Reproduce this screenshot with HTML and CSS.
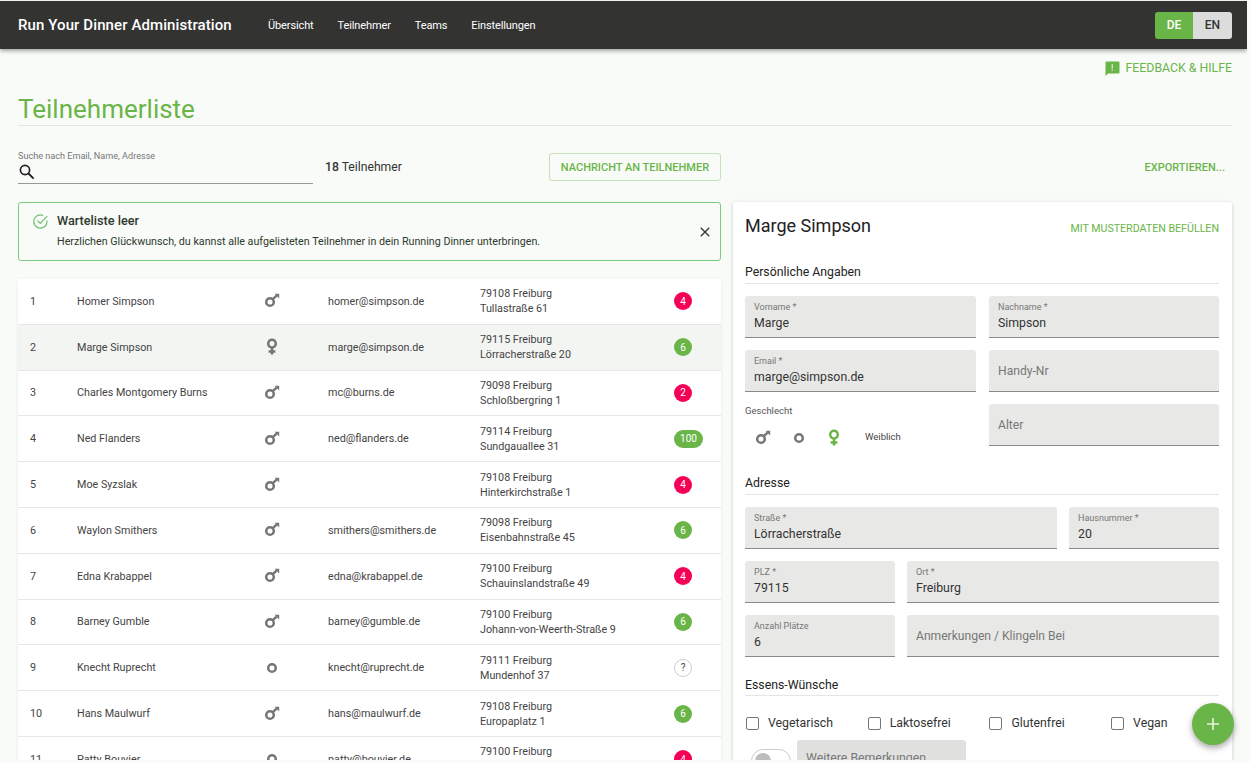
FILE: index.html
```html
<!DOCTYPE html>
<html lang="de">
<head>
  <meta charset="UTF-8">
  <title>Run Your Dinner Administration</title>
  <link rel="stylesheet" href="styles.css">
</head>
<body>
  <svg class="defs" width="0" height="0">
    <symbol id="male" viewBox="0 0 16 16"><circle cx="6" cy="9" r="3.8" fill="none" stroke="currentColor" stroke-width="2.5"/><path d="M8.8 6.2 12.6 2.6" stroke="currentColor" stroke-width="2.4"/><path d="M10.6 .8h4.6v4.6z" fill="currentColor"/></symbol>
    <symbol id="female" viewBox="0 0 14 18"><circle cx="7" cy="5.6" r="3.8" fill="none" stroke="currentColor" stroke-width="2.5"/><path d="M7 9.5v7M3.6 13.4h6.8" stroke="currentColor" stroke-width="2.5"/></symbol>
    <symbol id="neutral" viewBox="0 0 16 16"><circle cx="8" cy="8" r="3.8" fill="none" stroke="currentColor" stroke-width="2.5"/></symbol>
  </svg>

  <!-- Kopfzeile -->
  <header class="topbar">
    <div class="brand">Run Your Dinner Administration</div>
    <nav class="nav">
      <a>Übersicht</a>
      <a>Teilnehmer</a>
      <a>Teams</a>
      <a>Einstellungen</a>
    </nav>
    <div class="lang">
      <span class="lang-item active">DE</span>
      <span class="lang-item">EN</span>
    </div>
  </header>

  <main class="page">
    <div class="feedback">
      <svg width="16" height="16" viewBox="0 0 16 16"><path d="M1.5 2.5a1 1 0 0 1 1-1h12a1 1 0 0 1 1 1v10a1 1 0 0 1-1 1H4.2L1.5 16z" fill="#6ab547"/><path d="M7.7 4.2h1v4.4h-1zM7.7 9.6h1v1.2h-1z" fill="#fff"/></svg>
      <span>FEEDBACK &amp; HILFE</span>
    </div>

    <h1 class="title">Teilnehmerliste</h1>

    <!-- Suche und Aktionen -->
    <div class="toolbar">
      <div class="search">
        <label>Suche nach Email, Name, Adresse</label>
        <svg width="18" height="18" viewBox="0 0 18 18"><circle cx="7" cy="7" r="4.6" fill="none" stroke="#222" stroke-width="1.7"/><path d="M10.5 10.5 15.6 15.6" stroke="#222" stroke-width="1.9"/></svg>
      </div>
      <div class="count"><b>18</b> Teilnehmer</div>
      <button class="outline-btn">NACHRICHT AN TEILNEHMER</button>
      <a class="export">EXPORTIEREN...</a>
    </div>

    <div class="columns">
      <section class="left">
        <div class="alert">
          <svg class="alert-icon" width="17" height="17" viewBox="0 0 17 17"><path d="M15 7.6v.9A6.6 6.6 0 1 1 11.1 2.5" fill="none" stroke="#6cc070" stroke-width="1.2"/><path d="M5.4 7.6 8.3 10.5 15.2 3.2" fill="none" stroke="#6cc070" stroke-width="1.2"/></svg>
          <div class="alert-body">
            <div class="alert-title">Warteliste leer</div>
            <div class="alert-text">Herzlichen Glückwunsch, du kannst alle aufgelisteten Teilnehmer in dein Running Dinner unterbringen.</div>
          </div>
          <svg class="alert-close" width="10" height="10" viewBox="0 0 10 10"><path d="M.8.8l8.4 8.4M9.2.8.8 9.2" stroke="#333" stroke-width="1.3"/></svg>
        </div>

        <div class="list">
          <div class="row">
            <span class="c-nr">1</span><span class="c-name">Homer Simpson</span>
            <span class="c-icon"><svg class="ico"><use href="#male"/></svg></span>
            <span class="c-mail">homer@simpson.de</span>
            <span class="c-addr">79108 Freiburg<br>Tullastraße 61</span>
            <span class="c-badge"><i class="badge red">4</i></span>
          </div>
          <div class="row selected">
            <span class="c-nr">2</span><span class="c-name">Marge Simpson</span>
            <span class="c-icon"><svg class="ico-f"><use href="#female"/></svg></span>
            <span class="c-mail">marge@simpson.de</span>
            <span class="c-addr">79115 Freiburg<br>Lörracherstraße 20</span>
            <span class="c-badge"><i class="badge green">6</i></span>
          </div>
          <div class="row">
            <span class="c-nr">3</span><span class="c-name">Charles Montgomery Burns</span>
            <span class="c-icon"><svg class="ico"><use href="#male"/></svg></span>
            <span class="c-mail">mc@burns.de</span>
            <span class="c-addr">79098 Freiburg<br>Schloßbergring 1</span>
            <span class="c-badge"><i class="badge red">2</i></span>
          </div>
          <div class="row">
            <span class="c-nr">4</span><span class="c-name">Ned Flanders</span>
            <span class="c-icon"><svg class="ico"><use href="#male"/></svg></span>
            <span class="c-mail">ned@flanders.de</span>
            <span class="c-addr">79114 Freiburg<br>Sundgauallee 31</span>
            <span class="c-badge"><i class="badge green wide">100</i></span>
          </div>
          <div class="row">
            <span class="c-nr">5</span><span class="c-name">Moe Syzslak</span>
            <span class="c-icon"><svg class="ico"><use href="#male"/></svg></span>
            <span class="c-mail"></span>
            <span class="c-addr">79108 Freiburg<br>Hinterkirchstraße 1</span>
            <span class="c-badge"><i class="badge red">4</i></span>
          </div>
          <div class="row">
            <span class="c-nr">6</span><span class="c-name">Waylon Smithers</span>
            <span class="c-icon"><svg class="ico"><use href="#male"/></svg></span>
            <span class="c-mail">smithers@smithers.de</span>
            <span class="c-addr">79098 Freiburg<br>Eisenbahnstraße 45</span>
            <span class="c-badge"><i class="badge green">6</i></span>
          </div>
          <div class="row">
            <span class="c-nr">7</span><span class="c-name">Edna Krabappel</span>
            <span class="c-icon"><svg class="ico"><use href="#male"/></svg></span>
            <span class="c-mail">edna@krabappel.de</span>
            <span class="c-addr">79100 Freiburg<br>Schauinslandstraße 49</span>
            <span class="c-badge"><i class="badge red">4</i></span>
          </div>
          <div class="row">
            <span class="c-nr">8</span><span class="c-name">Barney Gumble</span>
            <span class="c-icon"><svg class="ico"><use href="#male"/></svg></span>
            <span class="c-mail">barney@gumble.de</span>
            <span class="c-addr">79100 Freiburg<br>Johann-von-Weerth-Straße 9</span>
            <span class="c-badge"><i class="badge green">6</i></span>
          </div>
          <div class="row">
            <span class="c-nr">9</span><span class="c-name">Knecht Ruprecht</span>
            <span class="c-icon"><svg class="ico"><use href="#neutral"/></svg></span>
            <span class="c-mail">knecht@ruprecht.de</span>
            <span class="c-addr">79111 Freiburg<br>Mundenhof 37</span>
            <span class="c-badge"><i class="badge unknown">?</i></span>
          </div>
          <div class="row">
            <span class="c-nr">10</span><span class="c-name">Hans Maulwurf</span>
            <span class="c-icon"><svg class="ico"><use href="#male"/></svg></span>
            <span class="c-mail">hans@maulwurf.de</span>
            <span class="c-addr">79108 Freiburg<br>Europaplatz 1</span>
            <span class="c-badge"><i class="badge green">6</i></span>
          </div>
          <div class="row">
            <span class="c-nr">11</span><span class="c-name">Patty Bouvier</span>
            <span class="c-icon"><svg class="ico"><use href="#neutral"/></svg></span>
            <span class="c-mail">patty@bouvier.de</span>
            <span class="c-addr">79100 Freiburg<br>&nbsp;</span>
            <span class="c-badge"><i class="badge red">4</i></span>
          </div>
        </div>
      </section>

      <!-- Formular -->
      <section class="card">
        <div class="card-head">
          <h2>Marge Simpson</h2>
          <a class="fill-link">MIT MUSTERDATEN BEFÜLLEN</a>
        </div>

        <h3 class="group">Persönliche Angaben</h3>
        <div class="form-row">
          <div class="field"><label>Vorname *</label><span>Marge</span></div>
          <div class="field"><label>Nachname *</label><span>Simpson</span></div>
        </div>
        <div class="form-row">
          <div class="field"><label>Email *</label><span>marge@simpson.de</span></div>
          <div class="field empty"><span>Handy-Nr</span></div>
        </div>
        <div class="form-row">
          <div class="gender">
            <div class="gender-label">Geschlecht</div>
            <div class="gender-icons">
              <svg class="ico"><use href="#male"/></svg>
              <svg class="ico"><use href="#neutral"/></svg>
              <svg class="ico-f on"><use href="#female"/></svg>
              <span>Weiblich</span>
            </div>
          </div>
          <div class="field empty"><span>Alter</span></div>
        </div>

        <h3 class="group group-addr">Adresse</h3>
        <div class="form-row street">
          <div class="field"><label>Straße *</label><span>Lörracherstraße</span></div>
          <div class="field"><label>Hausnummer *</label><span>20</span></div>
        </div>
        <div class="form-row city">
          <div class="field"><label>PLZ *</label><span>79115</span></div>
          <div class="field"><label>Ort *</label><span>Freiburg</span></div>
        </div>
        <div class="form-row city">
          <div class="field"><label>Anzahl Plätze</label><span>6</span></div>
          <div class="field empty"><span>Anmerkungen / Klingeln Bei</span></div>
        </div>

        <h3 class="group group-food">Essens-Wünsche</h3>
        <div class="checks">
          <label class="check"><i></i>Vegetarisch</label>
          <label class="check"><i></i>Laktosefrei</label>
          <label class="check"><i></i>Glutenfrei</label>
          <label class="check"><i></i>Vegan</label>
        </div>
        <div class="more">
          <div class="switch"><i></i></div>
          <div class="more-field">Weitere Bemerkungen</div>
        </div>
      </section>
    </div>
  </main>

  <button class="fab">
    <svg width="14" height="14" viewBox="0 0 14 14"><path d="M7 1v12M1 7h12" stroke="#e6f3df" stroke-width="1.6"/></svg>
  </button>
</body>
</html>
```

FILE: styles.css
```css
html {
  overflow: hidden;
}

body {
  margin: 0;
  width: 1247px;
  height: 760px;
  overflow: hidden;
  background: #f9fbf9;
  font-family: Roboto, "Liberation Sans", sans-serif;
  color: #333;
}

.defs {
  position: absolute;
}

/* Kopfzeile */
.topbar {
  display: flex;
  align-items: center;
  height: 48px;
  margin-top: 1px;
  padding: 0 15px 0 18px;
  background: #333332;
  box-shadow: 0 2px 4px rgba(0, 0, 0, 0.35);
  color: #fff;
}

.brand {
  width: 250px;
  font-size: 15px;
  font-weight: 500;
  letter-spacing: 0.1px;
}

.nav {
  display: flex;
  gap: 24px;
  font-size: 11px;
  letter-spacing: -0.12px;
  flex: 1;
}

.lang {
  display: flex;
  height: 27px;
  border-radius: 3px;
  overflow: hidden;
  font-size: 12px;
  font-weight: 500;
}

.lang-item {
  display: flex;
  align-items: center;
  justify-content: center;
  width: 39px;
  background: #dcdcdc;
  color: #333;
}

.lang-item.active {
  width: 38px;
  background: #6ab547;
  color: #fff;
}

/* Inhalt */
.page {
  padding: 0 15px 0 18px;
}

.feedback {
  display: flex;
  justify-content: flex-end;
  align-items: center;
  gap: 6px;
  box-sizing: border-box;
  height: 36px;
  padding-top: 2px;
  font-size: 12.3px;
  color: #6ab547;
}

.title {
  margin: 7px 0 0;
  padding-bottom: 1px;
  height: 32px;
  border-bottom: 1px solid #e4e6e4;
  font-size: 26px;
  line-height: 34px;
  font-weight: 400;
  color: #6ab547;
}

.toolbar {
  display: flex;
  align-items: center;
  height: 60px;
  margin-top: 11px;
}

.search {
  position: relative;
  width: 295px;
  height: 36px;
  box-sizing: border-box;
  margin-bottom: 2px;
  padding-top: 2px;
  border-bottom: 1px solid #999;
}

.search label {
  display: block;
  font-size: 9.1px;
  line-height: 12px;
  color: #777;
}

.search svg {
  display: block;
  margin-top: 1px;
}

.count {
  width: 224px;
  margin-left: 12px;
  font-size: 12.2px;
}

.count b {
  font-weight: 500;
}

.outline-btn {
  width: 172px;
  height: 28px;
  padding: 0;
  border: 1px solid #c6e2b8;
  border-radius: 3px;
  background: transparent;
  font-family: inherit;
  font-size: 11px;
  font-weight: 500;
  color: #6ab547;
}

.export {
  margin-left: auto;
  margin-right: 7px;
  font-size: 11px;
  font-weight: 500;
  color: #6ab547;
}

.columns {
  display: grid;
  grid-template-columns: 703px 499px;
  gap: 12px;
  margin-top: 5px;
}

/* Hinweis */
.alert {
  display: flex;
  align-items: center;
  box-sizing: border-box;
  height: 59px;
  margin-bottom: 18px;
  padding: 0 10px 0 13px;
  border: 1px solid #7ccb80;
  border-radius: 3px;
}

.alert-icon {
  align-self: flex-start;
  margin-top: 10px;
}

.alert-body {
  flex: 1;
  margin-left: 8px;
}

.alert-title {
  margin-top: -3px;
  font-size: 12.7px;
  font-weight: 500;
  line-height: 17px;
  color: #2d3a2d;
}

.alert-text {
  margin-top: 6px;
  font-size: 10.73px;
  line-height: 14px;
  color: #2d3a2d;
}

/* Teilnehmerliste */
.list {
  background: #fff;
  box-shadow: 0 1px 3px rgba(0, 0, 0, 0.08);
}

.row {
  display: grid;
  grid-template-columns: 47px 170px 50px 183px 194px 50px;
  align-items: center;
  box-sizing: border-box;
  height: 45.8px;
  padding-left: 12px;
  border-bottom: 1px solid #e6e8e6;
  font-size: 10.75px;
  color: #444;
}

.row.selected {
  background: #f3f5f3;
}

.c-icon {
  display: flex;
  justify-content: center;
  color: #757575;
}

.c-mail {
  padding-left: 31px;
}

.c-addr {
  line-height: 15px;
}

.c-badge {
  display: flex;
}

.ico {
  display: block;
  width: 16px;
  height: 16px;
}

.ico-f {
  display: block;
  width: 14px;
  height: 18px;
}

.badge {
  display: flex;
  align-items: center;
  justify-content: center;
  min-width: 18px;
  height: 18px;
  border-radius: 9px;
  font-size: 10px;
  font-style: normal;
  color: #fff;
}

.badge.red {
  background: #f50057;
}

.badge.green {
  background: #6ab547;
}

.badge.wide {
  padding: 0 5.5px;
}

.badge.unknown {
  box-sizing: border-box;
  border: 1px solid #ccc;
  color: #444;
  background: #fff;
}

/* Formular */
.card {
  box-sizing: border-box;
  height: 600px;
  padding: 0 13px 0 12px;
  background: #fff;
  border-radius: 3px;
  box-shadow: 0 1px 4px rgba(0, 0, 0, 0.18);
}

.card-head {
  display: flex;
  justify-content: space-between;
  align-items: center;
  height: 47px;
}

.card-head h2 {
  margin: 0;
  font-size: 18px;
  font-weight: 400;
  color: #222;
}

.fill-link {
  margin-top: 5px;
  font-size: 10.65px;
  color: #6ab547;
}

.group {
  margin: 15px 0 12px;
  padding-bottom: 2px;
  border-bottom: 1px solid #e4e6e4;
  font-size: 12.3px;
  line-height: 17px;
  font-weight: 400;
  color: #222;
}

.group-addr {
  margin-top: 28px;
}

.group-food {
  margin-top: 20px;
  padding-bottom: 1px;
}

.form-row {
  display: grid;
  grid-template-columns: 231px 230px;
  justify-content: space-between;
  margin-bottom: 12px;
}

.form-row.street {
  grid-template-columns: 312px 150px;
}

.form-row.city {
  grid-template-columns: 150px 312px;
}

.field {
  box-sizing: border-box;
  height: 42px;
  padding: 6px 9px 0;
  background: #e8e8e6;
  border-bottom: 1px solid #8a8a8a;
  border-radius: 3px 3px 0 0;
  font-size: 12.3px;
  color: #333;
}

.field label {
  display: block;
  font-size: 9px;
  line-height: 11px;
  color: #777;
}

.field span {
  display: block;
  margin-top: 2px;
  line-height: 17px;
}

.field.empty {
  padding-top: 10.5px;
  font-size: 12.1px;
  color: #777;
}

.gender-label {
  font-size: 9.5px;
  line-height: 14px;
  color: #555;
}

.gender-icons {
  display: flex;
  align-items: center;
  gap: 20px;
  margin: 11px 0 0 10px;
  color: #757575;
}

.gender-icons span {
  margin: 0 0 4px 4px;
  font-size: 9.5px;
  color: #444;
}

.ico-f.on {
  color: #6ab547;
}

.checks {
  display: grid;
  grid-template-columns: repeat(4, 121.7px);
  margin-top: 20px;
}

.check {
  display: flex;
  align-items: center;
  gap: 9px;
  margin-left: 1px;
  font-size: 12.3px;
  color: #333;
}

.check i {
  box-sizing: border-box;
  width: 13px;
  height: 13px;
  border: 1.5px solid #777;
  border-radius: 2px;
}

.more {
  display: flex;
  gap: 6px;
  margin: 10px 0 0 6px;
}

.switch {
  box-sizing: border-box;
  width: 40px;
  height: 24px;
  margin-top: 9px;
  padding: 3px;
  border: 1px solid #ccc;
  border-radius: 12px;
}

.switch i {
  display: block;
  width: 16px;
  height: 16px;
  border-radius: 50%;
  background: #bdbdbd;
}

.more-field {
  box-sizing: border-box;
  width: 169px;
  height: 42px;
  padding: 11px 9px;
  background: #e0e1df;
  border-radius: 3px 3px 0 0;
  font-size: 12.3px;
  color: #777;
}

.fab {
  position: fixed;
  left: 1192px;
  top: 703px;
  display: flex;
  align-items: center;
  justify-content: center;
  width: 42px;
  height: 42px;
  padding: 0;
  border: none;
  border-radius: 50%;
  background: #6ab547;
  box-shadow: 0 3px 6px rgba(0, 0, 0, 0.35);
}
```
